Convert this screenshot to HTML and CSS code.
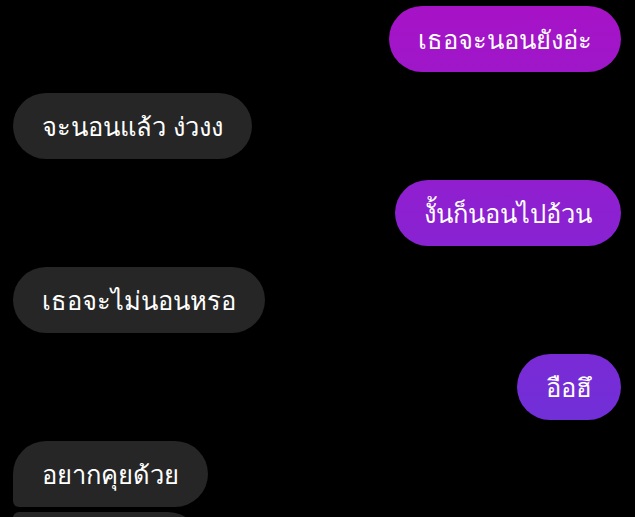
FILE: index.html
```html
<!DOCTYPE html>
<html lang="th">
<head>
<meta charset="utf-8">
<title>Chat</title>
<link rel="stylesheet" href="styles.css">
</head>
<body>
<main class="thread">
  <div class="row row-out"><div class="bubble out">เธอจะนอนยังอ่ะ</div></div>
  <div class="row row-in"><div class="bubble in">จะนอนแล้ว ง่วงง</div></div>
  <div class="row row-out"><div class="bubble out">งั้นก็นอนไปอ้วน</div></div>
  <div class="row row-in"><div class="bubble in">เธอจะไม่นอนหรอ</div></div>
  <div class="row row-out"><div class="bubble out">อือฮึ</div></div>
  <div class="group">
    <div class="row row-in"><div class="bubble in first">อยากคุยด้วย</div></div>
    <div class="row row-in"><div class="bubble in next peek" aria-hidden="true"></div></div>
  </div>
</main>
</body>
</html>
```
FILE: styles.css
```css
html, body {
  margin: 0;
  padding: 0;
  background: #000;
  height: 100%;
  overflow: hidden;
}

.thread {
  display: flex;
  flex-direction: column;
  gap: 21px;
  padding: 6px 14px 0 13px;
  font-family: "Noto Sans", "DejaVu Sans", sans-serif;
}

.row {
  display: flex;
}

.row-out {
  justify-content: flex-end;
}

.row-in {
  justify-content: flex-start;
}

.group {
  display: flex;
  flex-direction: column;
  gap: 5px;
}

.bubble {
  height: 66px;
  line-height: 66px;
  padding: 0 29px;
  border-radius: 33px;
  font-size: 25.5px;
  color: #fff;
  white-space: nowrap;
  box-sizing: border-box;
}

.out {
  background: linear-gradient(180deg, #a812c6 0%, #8a22d2 45%, #6436da 100%);
  background-attachment: fixed;
}

.in {
  background: #262626;
}

.first {
  border-bottom-left-radius: 6px;
}

.next {
  border-top-left-radius: 6px;
}

.peek {
  width: 188px;
}
```
